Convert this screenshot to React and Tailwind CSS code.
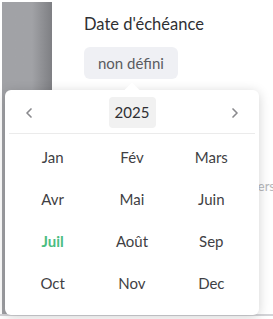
import { ChevronLeft, ChevronRight } from "lucide-react";

const months = [
  "Jan", "Fév", "Mars",
  "Avr", "Mai", "Juin",
  "Juil", "Août", "Sep",
  "Oct", "Nov", "Dec",
];

export default function App() {
  const current = 6;

  return (
    <div className="relative w-[273px] h-[319px] bg-white overflow-hidden font-['Lato',sans-serif]">
      <div className="flex h-[316px] pt-[2px] pl-[2px] border-b-[2px] border-[#d4d4d8]">
        <div className="w-[50px] h-full bg-gradient-to-r from-[#a1a2a6] from-60% to-[#7e7f83]" />
        <div className="flex-1 pl-[32px] pt-[12px]">
          <p className="text-[16.5px] text-[#2f2f33] leading-[20px]">Date d'échéance</p>
          <button className="mt-[13px] h-[32px] px-[14px] rounded-md bg-[#eff0f4] text-[15px] text-[#5a5b60]">
            non défini
          </button>
          <p className="mt-[98px] text-right text-[13px] text-[#b6b7bb] -mr-[2px]">Filtrers</p>
        </div>
      </div>

      <div className="absolute left-[5px] top-[90px] w-[254px] h-[225px] bg-white rounded-md shadow-[0_2px_12px_rgba(0,0,0,0.18)]">
        <div className="absolute left-[121px] -top-[5px] w-[12px] h-[12px] rotate-45 bg-white" />
        <div className="relative flex items-center justify-between h-[44px] px-[12px] pt-[2px] border-b border-[#ebebeb] mx-[4px]">
          <ChevronLeft className="w-[16px] h-[16px] text-[#8a8a8e]" strokeWidth={2.5} />
          <div className="h-[31px] w-[47px] flex items-center justify-center rounded bg-[#f1f1f1] text-[15px] text-[#2f2f33]">
            2025
          </div>
          <ChevronRight className="w-[16px] h-[16px] text-[#8a8a8e]" strokeWidth={2.5} />
        </div>
        <div className="grid grid-cols-3 px-[8px] pt-[2px]">
          {months.map((m, i) => (
            <div
              key={m}
              className={
                "h-[42px] flex items-center justify-center text-[15px] " +
                (i === current ? "text-[#4bbd81] font-bold" : "text-[#3f3f44]")
              }
            >
              {m}
            </div>
          ))}
        </div>
      </div>
    </div>
  );
}
